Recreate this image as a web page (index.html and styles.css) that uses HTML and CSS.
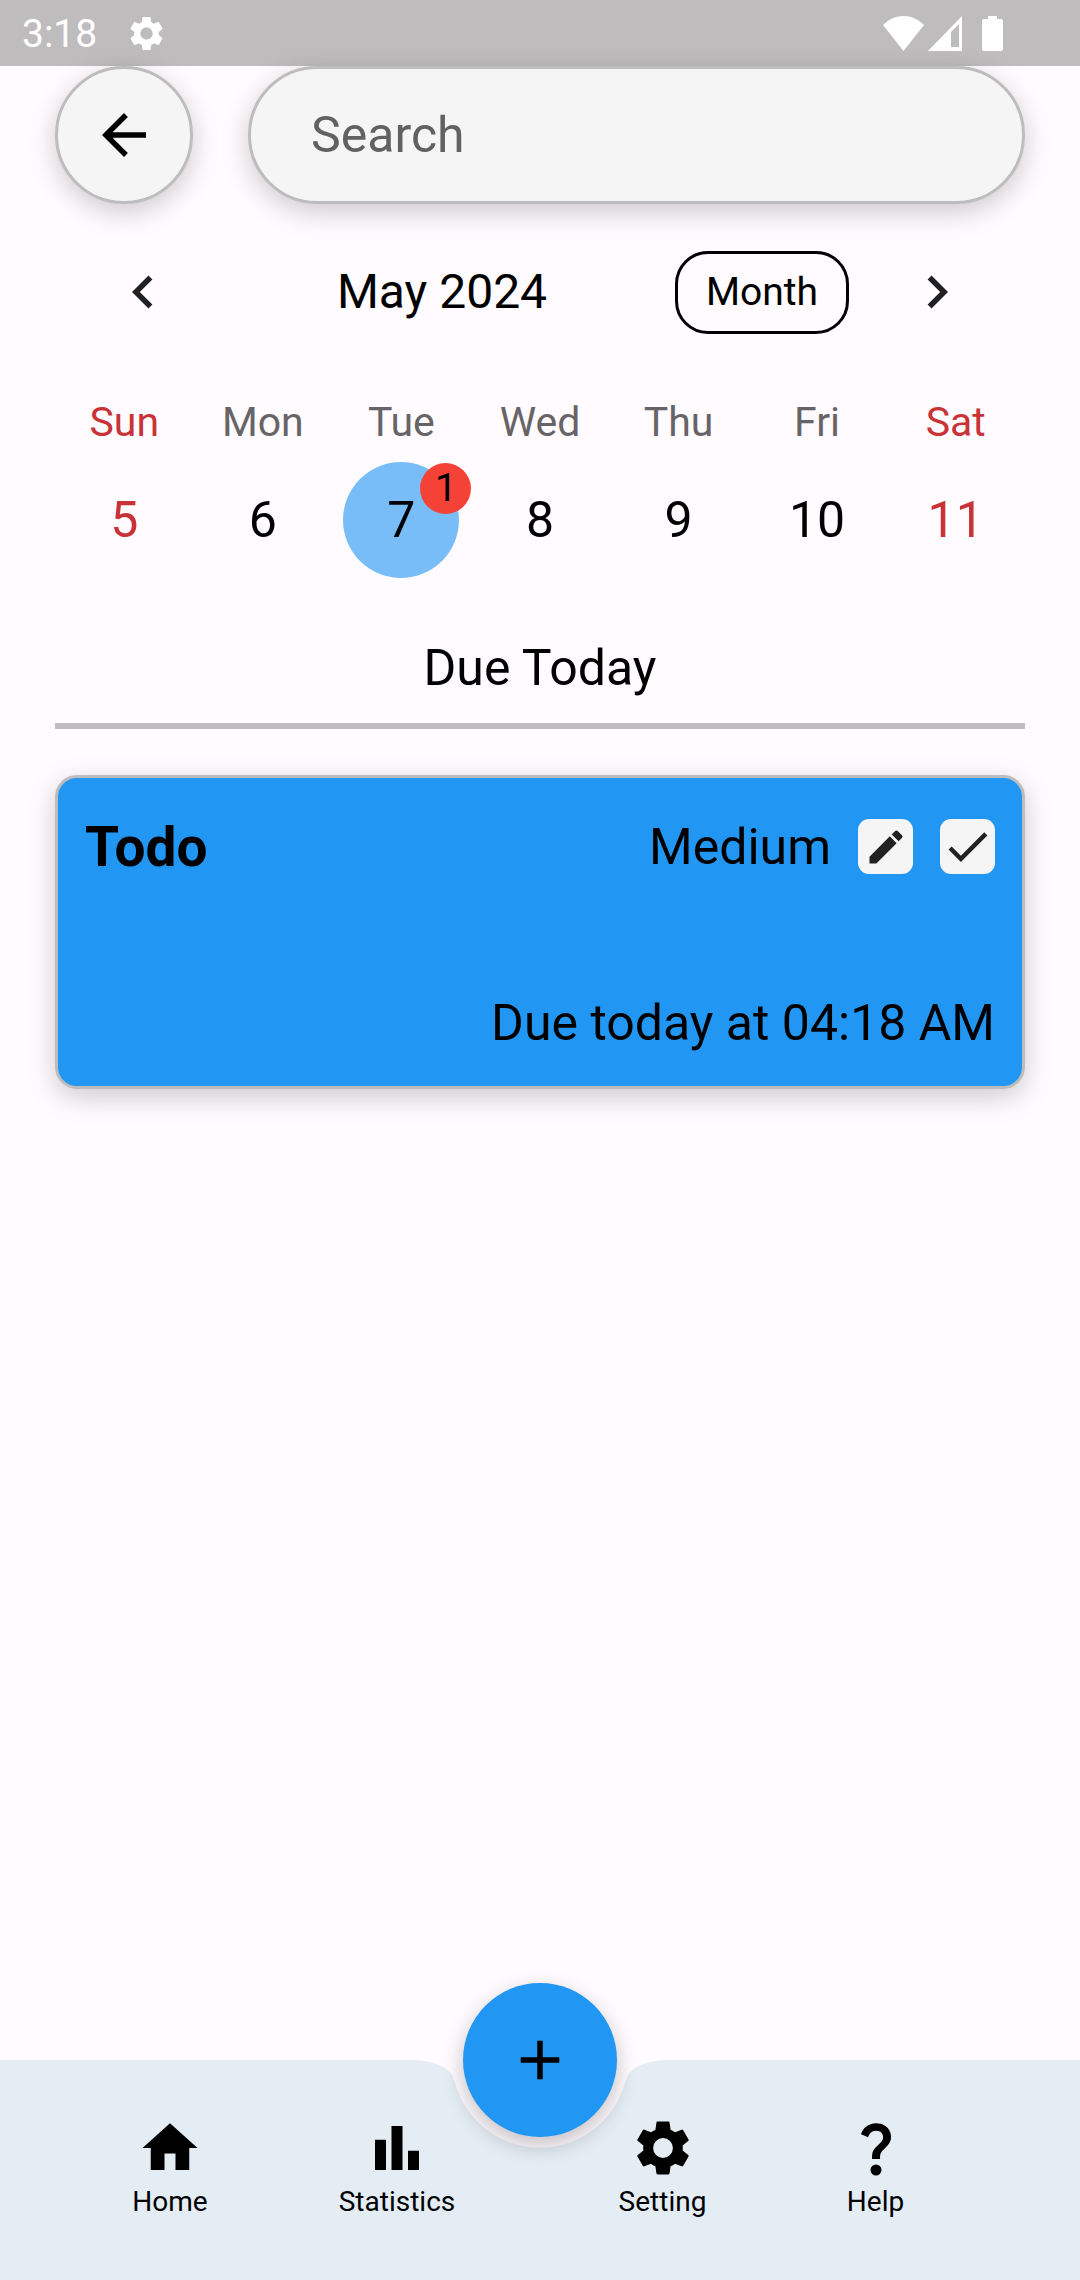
FILE: index.html
```html
<!DOCTYPE html>
<html lang="en">
<head>
<meta charset="utf-8">
<meta name="viewport" content="width=device-width, initial-scale=1">
<title>Due Today</title>
<link rel="stylesheet" href="styles.css">
</head>
<body>
<div class="status-bar">
  <span class="status-time">3:18</span>
  <svg class="status-gear" viewBox="0 0 24 24" aria-hidden="true"><path d="M19.14 12.94c.04-.3.06-.61.06-.94 0-.32-.02-.64-.07-.94l2.03-1.58c.18-.14.23-.41.12-.61l-1.92-3.32c-.12-.22-.37-.29-.59-.22l-2.39.96c-.5-.38-1.03-.7-1.62-.94l-.36-2.54c-.04-.24-.24-.41-.48-.41h-3.84c-.24 0-.43.17-.47.41l-.36 2.54c-.59.24-1.13.57-1.62.94l-2.39-.96c-.22-.08-.47 0-.59.22L2.74 8.87c-.12.21-.08.47.12.61l2.03 1.58c-.05.3-.09.63-.09.94s.02.64.07.94l-2.03 1.58c-.18.14-.23.41-.12.61l1.92 3.32c.12.22.37.29.59.22l2.39-.96c.5.38 1.03.7 1.62.94l.36 2.54c.05.24.24.41.48.41h3.84c.24 0 .44-.17.47-.41l.36-2.54c.59-.24 1.13-.56 1.62-.94l2.39.96c.22.08.47 0 .59-.22l1.92-3.32c.12-.22.07-.47-.12-.61l-2.01-1.58zM12 15.6A3.6 3.6 0 1 1 12 8.4a3.6 3.6 0 0 1 0 7.2z"/></svg>
  <div class="status-icons">
    <svg width="41" height="35" viewBox="0 0 41 35" aria-hidden="true"><path d="M20.500 35 0 9C6 3 13 0 20.500 0S35 3 41 9z"/></svg>
    <svg width="34" height="35" viewBox="0 0 34 35" aria-hidden="true"><path fill-rule="evenodd" d="M34 0v35H0zM31 8l-8 8v15h8z"/></svg>
    <svg class="status-battery" width="21" height="35" viewBox="0 0 21 35" aria-hidden="true"><path d="M6 0h9v3h4a2 2 0 0 1 2 2v28a2 2 0 0 1-2 2H2a2 2 0 0 1-2-2V5a2 2 0 0 1 2-2h4z"/></svg>
  </div>
</div>

<main class="content">
  <div class="toolbar">
    <button class="back-button" type="button" aria-label="Back">
      <svg class="icon" viewBox="0 0 24 24" aria-hidden="true"><path d="M20 11H7.83l5.59-5.59L12 4l-8 8 8 8 1.410-1.410L7.830 13H20z"/></svg>
    </button>
    <input class="search" type="text" placeholder="Search" aria-label="Search">
  </div>

  <section class="calendar">
    <div class="calendar-header">
      <button class="chevron" type="button" aria-label="Previous week">
        <svg class="icon" viewBox="0 0 24 24" aria-hidden="true"><path d="M15.410 7.410 14 6l-6 6 6 6 1.410-1.410L10.830 12z"/></svg>
      </button>
      <h1 class="calendar-title">May 2024</h1>
      <button class="format-button" type="button">Month</button>
      <button class="chevron" type="button" aria-label="Next week">
        <svg class="icon" viewBox="0 0 24 24" aria-hidden="true"><path d="M10 6 8.590 7.410 13.170 12l-4.580 4.590L10 18l6-6z"/></svg>
      </button>
    </div>
    <table class="week">
      <thead>
        <tr>
          <th class="weekend" scope="col">Sun</th>
          <th scope="col">Mon</th>
          <th scope="col">Tue</th>
          <th scope="col">Wed</th>
          <th scope="col">Thu</th>
          <th scope="col">Fri</th>
          <th class="weekend" scope="col">Sat</th>
        </tr>
      </thead>
      <tbody>
        <tr>
          <td class="weekend">5</td>
          <td>6</td>
          <td><div class="today">7<span class="badge">1</span></div></td>
          <td>8</td>
          <td>9</td>
          <td>10</td>
          <td class="weekend">11</td>
        </tr>
      </tbody>
    </table>
  </section>

  <h2 class="section-title">Due Today</h2>

  <article class="task">
    <div class="task-top">
      <h3 class="task-name">Todo</h3>
      <span class="task-text">Medium</span>
      <button class="task-action" type="button" aria-label="Edit">
        <svg class="icon-edit" viewBox="0 0 24 24" aria-hidden="true"><path d="M3 17.250V21h3.750L17.810 9.940l-3.750-3.750zM20.710 7.040a1 1 0 0 0 0-1.410l-2.340-2.340a1 1 0 0 0-1.410 0l-1.830 1.830 3.750 3.750z"/></svg>
      </button>
      <button class="task-action" type="button" aria-label="Mark as done">
        <svg class="icon-check" viewBox="0 0 24 24" aria-hidden="true"><path d="M9 16.170 4.830 12l-1.420 1.410L9 19 21 7l-1.410-1.410z"/></svg>
      </button>
    </div>
    <p class="task-text task-due">Due today at 04:18 AM</p>
  </article>
</main>

<nav class="bottom-bar">
  <div class="bar-shape" aria-hidden="true">
    <span class="bar-side"></span>
    <svg class="bar-notch" viewBox="0 0 264 220"><path d="M0 0Q41.250 0 46.700 21.500A88 88 0 0 0 217.300 21.500Q222.750 0 264 0V220H0z"/></svg>
    <span class="bar-side"></span>
  </div>
  <button class="fab" type="button" aria-label="Add task">
    <svg class="icon" viewBox="0 0 24 24" aria-hidden="true"><path d="M19 13h-6v6h-2v-6H5v-2h6V5h2v6h6z"/></svg>
  </button>
  <a class="nav-item" href="#home">
    <svg class="icon" viewBox="0 0 24 24" aria-hidden="true"><path d="M10 20v-6h4v6h5v-8h3L12 3 2 12h3v8z"/></svg>
    Home
  </a>
  <a class="nav-item" href="#statistics">
    <svg class="icon" viewBox="0 0 24 24" aria-hidden="true"><path d="M4 9h4v11H4zm12 4h4v7h-4zm-6-9h4v16h-4z"/></svg>
    Statistics
  </a>
  <a class="nav-item nav-after-fab" href="#setting">
    <svg class="icon" viewBox="0 0 24 24" aria-hidden="true"><path d="M19.14 12.94c.04-.3.06-.61.06-.94 0-.32-.02-.64-.07-.94l2.03-1.58c.18-.14.23-.41.12-.61l-1.92-3.32c-.12-.22-.37-.29-.59-.22l-2.39.96c-.5-.38-1.03-.7-1.62-.94l-.36-2.54c-.04-.24-.24-.41-.48-.41h-3.84c-.24 0-.43.17-.47.41l-.36 2.54c-.59.24-1.13.57-1.62.94l-2.39-.96c-.22-.08-.47 0-.59.22L2.74 8.87c-.12.21-.08.47.12.61l2.03 1.58c-.05.3-.09.63-.09.94s.02.64.07.94l-2.03 1.58c-.18.14-.23.41-.12.61l1.92 3.32c.12.22.37.29.59.22l2.39-.96c.5.38 1.03.7 1.62.94l.36 2.54c.05.24.24.41.48.41h3.84c.24 0 .44-.17.47-.41l.36-2.54c.59-.24 1.13-.56 1.62-.94l2.39.96c.22.08.47 0 .59-.22l1.92-3.32c.12-.22.07-.47-.12-.61l-2.01-1.58zM12 15.6A3.6 3.6 0 1 1 12 8.4a3.6 3.6 0 0 1 0 7.2z"/></svg>
    Setting
  </a>
  <a class="nav-item" href="#help">
    <svg class="icon" viewBox="0 0 24 24" aria-hidden="true"><path d="M11.070 12.850c.77-1.390 2.250-2.210 3.110-3.440.91-1.290.4-3.700-2.180-3.700-1.690 0-2.520 1.280-2.870 2.340L6.540 6.960C7.250 4.830 9.180 3 11.990 3c2.350 0 3.960 1.070 4.780 2.410.7 1.150 1.110 3.300.03 4.900-1.200 1.770-2.350 2.310-2.970 3.450-.25.46-.35.76-.35 2.240h-2.890c-.01-.78-.13-2.050.48-3.150zM14 20a2 2 0 1 1-4 0 2 2 0 0 1 4 0z"/></svg>
    Help
  </a>
</nav>
</body>
</html>
```
FILE: styles.css
```css
*,
*::before,
*::after {
  box-sizing: border-box;
}

body {
  margin: 0;
  min-height: 100vh;
  display: flex;
  flex-direction: column;
  background: #fffbff;
  color: #000;
  font-family: Roboto, "Liberation Sans", sans-serif;
  font-size: 50px;
  line-height: 58px;
}

h1,
h2,
h3,
p {
  margin: 0;
  font-weight: 400;
}

button,
input {
  font: inherit;
  color: inherit;
  margin: 0;
  padding: 0;
  border: 0;
  background: none;
}

svg {
  display: block;
  flex: none;
  fill: currentColor;
}

.icon {
  width: 66px;
  height: 66px;
}

/* System status bar */
.status-bar {
  display: flex;
  align-items: center;
  height: 66px;
  padding: 0 77px 0 22px;
  background: #bfbcbe;
  color: #fff;
  font-size: 39px;
}

.status-time {
  padding-top: 2px;
}

.status-gear {
  width: 41px;
  height: 41px;
  margin-left: 29px;
}

.status-icons {
  display: flex;
  gap: 4px;
  margin-left: auto;
}

.status-battery {
  margin-left: 16px;
}

.content {
  padding: 0 55px;
}

/* Back button and search */
.toolbar {
  display: grid;
  grid-template-columns: 138px 1fr;
  gap: 55px;
}

.back-button,
.search {
  height: 138px;
  border: 3px solid #bdbdbd;
  border-radius: 69px;
  background: #f5f5f5;
  box-shadow: 0 8px 28px rgba(0, 0, 0, 0.2);
}

.back-button {
  display: grid;
  place-items: center;
}

.search {
  width: 100%;
  padding: 0 60px;
}

.search::placeholder {
  color: #616161;
  opacity: 1;
}

/* Calendar */
.calendar-header {
  display: flex;
  align-items: center;
  padding: 22px 0 38px;
}

.chevron {
  margin: 0 22px;
  padding: 33px;
  color: #212121;
}

.calendar-title {
  flex: 1;
  font-size: 48px;
  text-align: center;
}

.format-button {
  min-width: 174px;
  height: 83px;
  margin-left: 22px;
  padding: 0 25px;
  border: 3px solid #000;
  border-radius: 33px;
  font-size: 39px;
}

.week {
  width: 100%;
  table-layout: fixed;
  border-collapse: collapse;
  text-align: center;
}

.week th {
  height: 52px;
  padding: 0;
  color: #676467;
  font-size: 41px;
  font-weight: 400;
  line-height: 52px;
}

.week td {
  height: 144px;
  padding: 0;
}

.week .weekend {
  color: #c93236;
}

.today {
  position: relative;
  display: grid;
  place-items: center;
  width: 116px;
  height: 116px;
  margin: 0 auto;
  border-radius: 50%;
  background: #79bdf8;
}

.badge {
  position: absolute;
  top: 1px;
  right: -12px;
  width: 51px;
  border-radius: 50%;
  background: #f44336;
  font-size: 39px;
  line-height: 51px;
}

.section-title {
  padding: 47px 0 26px;
  border-bottom: 6px solid #bfbcbf;
  font-size: 50px;
  text-align: center;
}

/* Task card */
.task {
  display: flex;
  flex-direction: column;
  gap: 120px;
  margin-top: 46px;
  padding: 41px 27px 34px;
  border: 3px solid #bdbdbd;
  border-radius: 22px;
  background: #2196f3;
  box-shadow: 0 8px 28px rgba(0, 0, 0, 0.2);
}

.task-top {
  display: flex;
  align-items: center;
  gap: 27px;
  height: 55px;
}

.task-name {
  flex: 1;
  font-size: 55px;
  font-weight: 700;
}

.task-due {
  text-align: right;
}

.task-action {
  display: grid;
  place-items: center;
  width: 55px;
  height: 55px;
  border-radius: 11px;
  background: #f5f5f5;
  color: #212121;
}

.icon-edit {
  width: 44px;
  height: 44px;
}

.icon-check {
  width: 53px;
  height: 53px;
}

/* Bottom bar */
.bottom-bar {
  position: relative;
  display: grid;
  grid-template-columns: 228fr 226fr 46fr 213fr 213fr;
  align-items: start;
  height: 220px;
  margin-top: auto;
  padding: 55px 98px 0 56px;
}

.bar-shape {
  position: absolute;
  inset: 0;
  display: flex;
}

.bar-side {
  flex: 1;
  background: #e4ecf4;
}

.bar-notch {
  width: 264px;
  height: 220px;
  color: #e4ecf4;
}

.fab {
  position: absolute;
  top: -77px;
  left: calc(50% - 77px);
  display: grid;
  place-items: center;
  width: 154px;
  height: 154px;
  border-radius: 50%;
  background: #2196f3;
  box-shadow: 0 8px 22px rgba(0, 0, 0, 0.24);
}

.nav-item {
  position: relative;
  display: flex;
  flex-direction: column;
  align-items: center;
  gap: 5px;
  color: #000;
  font-size: 28px;
  line-height: 32px;
  text-decoration: none;
}

.nav-after-fab {
  grid-column: 4;
}
```
